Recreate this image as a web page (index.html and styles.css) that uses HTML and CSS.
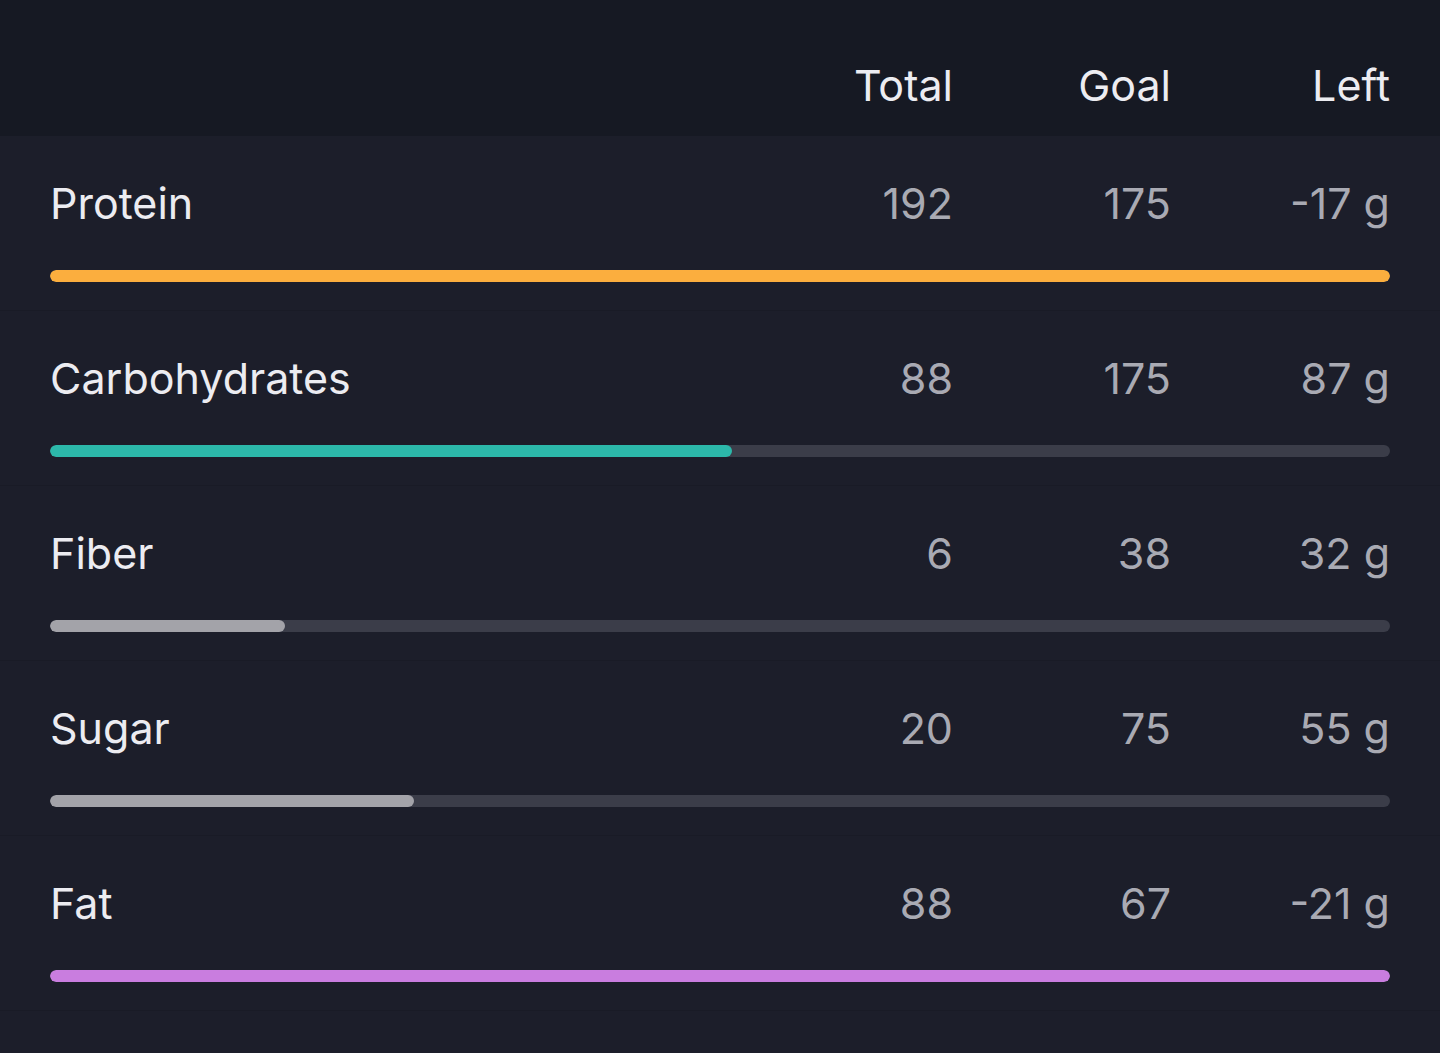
FILE: index.html
```html
<!DOCTYPE html>
<html lang="en">
<head>
<meta charset="utf-8">
<title>Nutrients</title>
<link rel="stylesheet" href="styles.css">
</head>
<body>
<div class="table">
  <div class="head">
    <div class="cols">
      <span class="name"></span>
      <span class="hcell">Total</span>
      <span class="hcell">Goal</span>
      <span class="hcell">Left</span>
    </div>
  </div>
  <div class="row">
    <div class="cols">
      <span class="name">Protein</span>
      <span class="num">192</span>
      <span class="num">175</span>
      <span class="num">-17 g</span>
    </div>
    <div class="track"><div class="fill orange" style="width:100%"></div></div>
  </div>
  <div class="row">
    <div class="cols">
      <span class="name">Carbohydrates</span>
      <span class="num">88</span>
      <span class="num">175</span>
      <span class="num">87 g</span>
    </div>
    <div class="track"><div class="fill teal" style="width:50.9%"></div></div>
  </div>
  <div class="row">
    <div class="cols">
      <span class="name">Fiber</span>
      <span class="num">6</span>
      <span class="num">38</span>
      <span class="num">32 g</span>
    </div>
    <div class="track"><div class="fill gray" style="width:17.5%"></div></div>
  </div>
  <div class="row">
    <div class="cols">
      <span class="name">Sugar</span>
      <span class="num">20</span>
      <span class="num">75</span>
      <span class="num">55 g</span>
    </div>
    <div class="track"><div class="fill gray" style="width:27.2%"></div></div>
  </div>
  <div class="row">
    <div class="cols">
      <span class="name">Fat</span>
      <span class="num">88</span>
      <span class="num">67</span>
      <span class="num">-21 g</span>
    </div>
    <div class="track"><div class="fill purple" style="width:100%"></div></div>
  </div>
</div>
</body>
</html>
```
FILE: styles.css
```css
html, body {
  margin: 0;
  padding: 0;
  background: #1c1e2a;
}
body {
  font-family: Inter, "Noto Sans", sans-serif;
  width: 1440px;
  height: 1053px;
  overflow: hidden;
}
.table {
  display: flex;
  flex-direction: column;
}
.head {
  background: #161923;
  height: 136px;
  padding: 0 50px 23px 50px;
  display: flex;
  align-items: flex-end;
  box-sizing: border-box;
}
.cols {
  display: grid;
  grid-template-columns: 1fr 200px 218px 219px;
  align-items: center;
  width: 100%;
  height: 56px;
}
.hcell {
  text-align: right;
  color: #ececf1;
  font-size: 43px;
  line-height: 56px;
}
.name {
  color: #ececf1;
  font-size: 43px;
  line-height: 56px;
}
.num {
  text-align: right;
  color: #a9aab3;
  font-size: 43px;
  line-height: 56px;
}
.row {
  height: 175px;
  box-sizing: border-box;
  padding: 39px 50px 0 50px;
  border-bottom: 1px solid #191b26;
  display: flex;
  flex-direction: column;
  gap: 39px;
}
.track {
  height: 12px;
  border-radius: 6px;
  background: #3b3d49;
  overflow: hidden;
}
.fill {
  height: 100%;
  border-radius: 6px;
}
.orange { background: #fbae3e; }
.teal { background: #2cb8aa; }
.gray { background: #a3a3a9; }
.purple { background: #c97ddf; }
```
